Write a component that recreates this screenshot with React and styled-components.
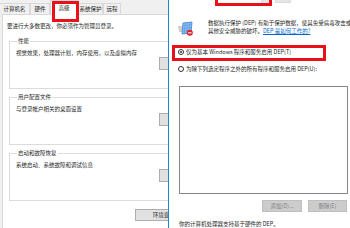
import React from 'react';
import styled, { createGlobalStyle } from 'styled-components';

const Global = createGlobalStyle`
  html, body { margin: 0; padding: 0; background: #fff; }
  body { width: 350px; height: 228px; overflow: hidden; }
`;

const Screen = styled.div`
  display: flex;
  width: 350px;
  height: 228px;
  overflow: hidden;
  font-family: "Noto Sans CJK SC", "Liberation Sans", sans-serif;
  font-size: 5.5px;
  line-height: 8px;
  color: #1e1e1e;
`;

/* ---------- left dialog: 系统属性 ---------- */
const LeftWindow = styled.div`
  width: 168px;
  flex: none;
  overflow: hidden;
  background: #f0f0f0;
  display: flex;
  flex-direction: column;
`;

const TabRow = styled.div`
  display: flex;
  align-items: flex-end;
  height: 14px;
  flex: none;
  margin-left: -1px;
`;

const Tab = styled.div`
  position: relative;
  box-sizing: border-box;
  width: ${(p) => p.$w}px;
  height: ${(p) => (p.$active ? 15 : 11)}px;
  margin-bottom: ${(p) => (p.$active ? -1 : 0)}px;
  border: 1px solid #d9d9d9;
  border-bottom: none;
  background: ${(p) => (p.$active ? '#fff' : '#f0f0f0')};
  display: flex;
  align-items: center;
  justify-content: center;
  white-space: nowrap;
  z-index: ${(p) => (p.$active ? 2 : 1)};
`;

const TabMark = styled.div`
  position: absolute;
  left: 1px;
  top: 0;
  width: 27px;
  height: 21px;
  box-sizing: border-box;
  border: 3px solid #e8101a;
  z-index: 3;
`;

const Panel = styled.div`
  flex: 1;
  margin-left: 2px;
  width: 230px;
  box-sizing: border-box;
  border-left: 1px solid #d9d9d9;
  border-top: 1px solid #d9d9d9;
  background: #fff;
  padding: 7px 0 0 4px;
  display: flex;
  flex-direction: column;
`;

const Note = styled.div`
  white-space: nowrap;
`;

const GroupBox = styled.fieldset`
  margin: ${(p) => (p.$first ? 7 : 4)}px 0 0 2px;
  width: 200px;
  box-sizing: border-box;
  height: 52px;
  padding: 4px 7px 6px 5px;
  border: 1px solid #dcdcdc;
  display: flex;
  flex-direction: column;
  min-inline-size: 0;
`;

const Legend = styled.legend`
  padding: 0 1px;
  margin-left: 2px;
  line-height: 8px;
  white-space: nowrap;
`;

const GroupText = styled.div`
  white-space: nowrap;
  padding-left: 1px;
`;

const Button = styled.div`
  box-sizing: border-box;
  width: ${(p) => p.$w}px;
  height: ${(p) => p.$h || 13}px;
  background: ${(p) => (p.$disabled ? '#cccccc' : '#e1e1e1')};
  border: 1px solid ${(p) => (p.$disabled ? '#bfbfbf' : '#adadad')};
  color: ${(p) => (p.$disabled ? '#838383' : '#1e1e1e')};
  display: flex;
  align-items: center;
  justify-content: center;
  white-space: nowrap;
  flex: none;
`;

const GroupButtonRow = styled.div`
  display: flex;
  justify-content: flex-end;
  margin-top: auto;
`;

const PanelFooter = styled.div`
  display: flex;
  margin: 8px 0 0 128px;
`;

/* ---------- right dialog: 性能选项 / DEP ---------- */
const RightWindow = styled.div`
  flex: 1;
  border-left: 1px solid #1c86d9;
  background: #fff;
  padding-left: 9px;
  display: flex;
  flex-direction: column;
  overflow: hidden;
`;

const TabStub = styled.div`
  position: relative;
  height: 6px;
  flex: none;
  display: flex;
  align-items: flex-start;
`;

const StubPiece = styled.div`
  width: ${(p) => p.$w}px;
  height: ${(p) => p.$h}px;
  margin-left: ${(p) => p.$ml}px;
  background: #e6e6e6;
  border: 1px solid #d9d9d9;
  border-top: none;
  box-sizing: border-box;
`;

const StubMark = styled.div`
  position: absolute;
  left: 37px;
  top: -16px;
  width: 57px;
  height: 22px;
  box-sizing: border-box;
  border: 3px solid #e8101a;
`;

const Intro = styled.div`
  display: flex;
  margin-top: 13px;
  align-items: flex-start;
`;

const IconWrap = styled.div`
  width: 15px;
  height: 15px;
  margin-top: 2px;
  flex: none;
`;

const IntroText = styled.div`
  margin-left: 15px;
  white-space: nowrap;
`;

const Link = styled.span`
  color: #0066cc;
  text-decoration: underline;
`;

const RadioRow = styled.div`
  display: flex;
  align-items: center;
  white-space: nowrap;
  box-sizing: border-box;
  ${(p) =>
    p.$marked
      ? `
    margin: 9px 0 0 -6px;
    width: 154px;
    height: 19px;
    border: 3px solid #e8101a;
    padding: 0 0 2px 3px;
  `
      : `
    margin-top: 4px;
    height: 8px;
  `}
`;

const Radio = styled.span`
  width: 6px;
  height: 6px;
  box-sizing: border-box;
  border: 1px solid #333;
  border-radius: 50%;
  margin-right: 2px;
  display: flex;
  align-items: center;
  justify-content: center;
  flex: none;
  &::after {
    content: '';
    width: 2px;
    height: 2px;
    border-radius: 50%;
    background: ${(p) => (p.$checked ? '#333' : 'transparent')};
  }
`;

const ListBox = styled.div`
  margin: 13px 0 0 1px;
  width: 169px;
  height: 108px;
  box-sizing: border-box;
  border: 1px solid #828790;
  background: #fff;
  flex: none;
`;

const ListButtons = styled.div`
  display: flex;
  justify-content: flex-end;
  gap: 6px;
  margin-top: 6px;
  padding-right: 3px;
`;

const Footnote = styled.div`
  margin: 8px 0 0 1px;
  white-space: nowrap;
`;

const DepIcon = () => (
  <svg width="15" height="15" viewBox="0 0 15 15">
    <g stroke="#8c8c8c" strokeWidth="0.8">
      <line x1="0" y1="6" x2="4" y2="6" />
      <line x1="0.5" y1="8" x2="4" y2="8" />
      <line x1="1" y1="10" x2="4" y2="10" />
    </g>
    <polygon points="5,2 14,1 13,12 4,13" fill="#8ec0f0" stroke="#3b7fd0" strokeWidth="0.8" />
    <g stroke="#4a8fd8" strokeWidth="0.5">
      <line x1="7.2" y1="1.7" x2="6.3" y2="12.7" />
      <line x1="9.5" y1="1.5" x2="8.6" y2="12.5" />
      <line x1="11.8" y1="1.2" x2="10.9" y2="12.3" />
      <line x1="4.8" y1="4.7" x2="13.8" y2="3.7" />
      <line x1="4.6" y1="7.5" x2="13.6" y2="6.5" />
      <line x1="4.3" y1="10.3" x2="13.3" y2="9.3" />
    </g>
    <circle cx="11.8" cy="11.8" r="3" fill="#d8232a" />
    <rect x="10" y="11.3" width="3.6" height="1.1" fill="#fff" />
  </svg>
);

export default function App() {
  return (
    <>
      <Global />
      <Screen>
        <LeftWindow>
          <TabRow>
            <Tab $w={31}>计算机名</Tab>
            <Tab $w={20}>硬件</Tab>
            <Tab $w={28} $active>
              高级
              <TabMark />
            </Tab>
            <Tab $w={25}>系统保护</Tab>
            <Tab $w={18}>远程</Tab>
          </TabRow>
          <Panel>
            <Note>要进行大多数更改，你必须作为管理员登录。</Note>
            <GroupBox $first>
              <Legend>性能</Legend>
              <GroupText>视觉效果，处理器计划，内存使用，以及虚拟内存</GroupText>
              <GroupButtonRow>
                <Button $w={42}>设置(S)...</Button>
              </GroupButtonRow>
            </GroupBox>
            <GroupBox>
              <Legend>用户配置文件</Legend>
              <GroupText>与登录帐户相关的桌面设置</GroupText>
              <GroupButtonRow>
                <Button $w={42}>设置(E)...</Button>
              </GroupButtonRow>
            </GroupBox>
            <GroupBox>
              <Legend>启动和故障恢复</Legend>
              <GroupText>系统启动、系统故障和调试信息</GroupText>
              <GroupButtonRow>
                <Button $w={42}>设置(T)...</Button>
              </GroupButtonRow>
            </GroupBox>
            <PanelFooter>
              <Button $w={70} $h={12}>环境变量(N)...</Button>
            </PanelFooter>
          </Panel>
        </LeftWindow>

        <RightWindow>
          <TabStub>
            <StubPiece $w={10} $h={4} $ml={83} />
            <StubPiece $w={16} $h={3} $ml={4} />
            <StubMark />
          </TabStub>
          <Intro>
            <IconWrap>
              <DepIcon />
            </IconWrap>
            <IntroText>
              数据执行保护 (DEP) 有助于保护数据，使其免受病毒攻击或
              <br />
              其他安全威胁的破坏。<Link>DEP 是如何工作的?</Link>
            </IntroText>
          </Intro>
          <RadioRow $marked>
            <Radio $checked />
            仅为基本 Windows 程序和服务启用 DEP(T)
          </RadioRow>
          <RadioRow>
            <Radio />
            为除下列选定程序之外的所有程序和服务启用 DEP(U):
          </RadioRow>
          <ListBox />
          <ListButtons>
            <Button $w={40} $h={12} $disabled>添加(D)...</Button>
            <Button $w={39} $h={12} $disabled>删除(E)</Button>
          </ListButtons>
          <Footnote>你的计算机处理器支持基于硬件的 DEP。</Footnote>
        </RightWindow>
      </Screen>
    </>
  );
}
